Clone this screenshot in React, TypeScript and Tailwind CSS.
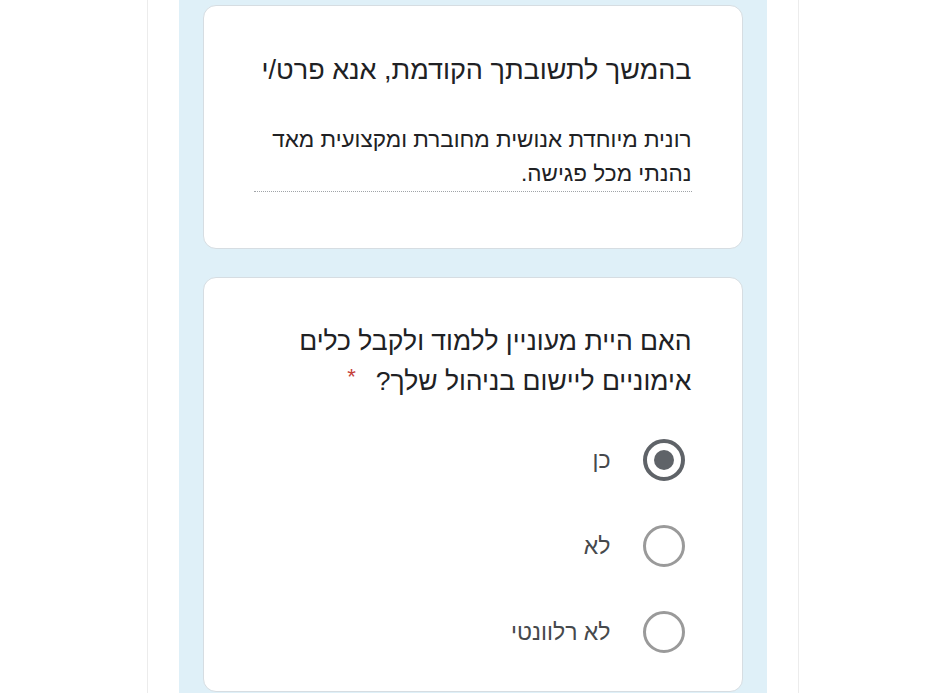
const FONT = "font-['Liberation_Sans','DejaVu_Sans',sans-serif]";

type Option = { label: string; checked: boolean };

const OPTIONS: Option[] = [
  { label: "כן", checked: true },
  { label: "לא", checked: false },
  { label: "לא רלוונטי", checked: false },
];

function Radio({ checked }: { checked: boolean }) {
  if (checked) {
    return (
      <span className="grid h-[42px] w-[42px] shrink-0 place-items-center rounded-full border-[4px] border-[#5f6368]">
        <span className="h-[20px] w-[20px] rounded-full bg-[#5f6368]" />
      </span>
    );
  }
  return <span className="h-[42px] w-[42px] shrink-0 rounded-full border-[3px] border-[#9a9a9a]" />;
}

export default function App() {
  return (
    <div dir="rtl" className={`flex h-[693px] w-full justify-center overflow-hidden bg-white ${FONT}`}>
      {/* page frame */}
      <div className="h-full w-[652px] border-x border-[#ececec] px-[31px]">
        <div className="flex h-full flex-col gap-[28px] bg-[#dff0f8] px-[24px] pt-[5px]">
          {/* previous answer card */}
          <section className="rounded-[13px] border border-[#d6dde2] bg-white px-[50px] pb-[56px] pt-[48px]">
            <h2 className="text-[27px] leading-[32px] text-[#202124]">בהמשך לתשובתך הקודמת, אנא פרט/י</h2>
            <p className="mt-[37px] border-b border-dotted border-[#a0a4a8] text-[22.5px] leading-[34px] text-[#202124]">
              רונית מיוחדת אנושית מחוברת ומקצועית מאד
              <br />
              נהנתי מכל פגישה.
            </p>
          </section>

          {/* question card */}
          <section className="rounded-[13px] border border-[#d6dde2] bg-white px-[50px] pb-[16px] pt-[43px]">
            <h2 className="text-[26.5px] leading-[40px] text-[#202124]">
              האם היית מעוניין ללמוד ולקבל כלים אימוניים ליישום בניהול שלך?
              <span className="mr-[20px] align-[6px] text-[22px] leading-none text-[#c5413a]">*</span>
            </h2>
            <ul className="mt-[16px]">
              {OPTIONS.map((opt) => (
                <li key={opt.label} className="flex h-[86px] items-center gap-[32px] pr-[7px]">
                  <Radio checked={opt.checked} />
                  <span className="text-[23px] text-[#46494c]">{opt.label}</span>
                </li>
              ))}
            </ul>
          </section>
        </div>
      </div>
    </div>
  );
}
